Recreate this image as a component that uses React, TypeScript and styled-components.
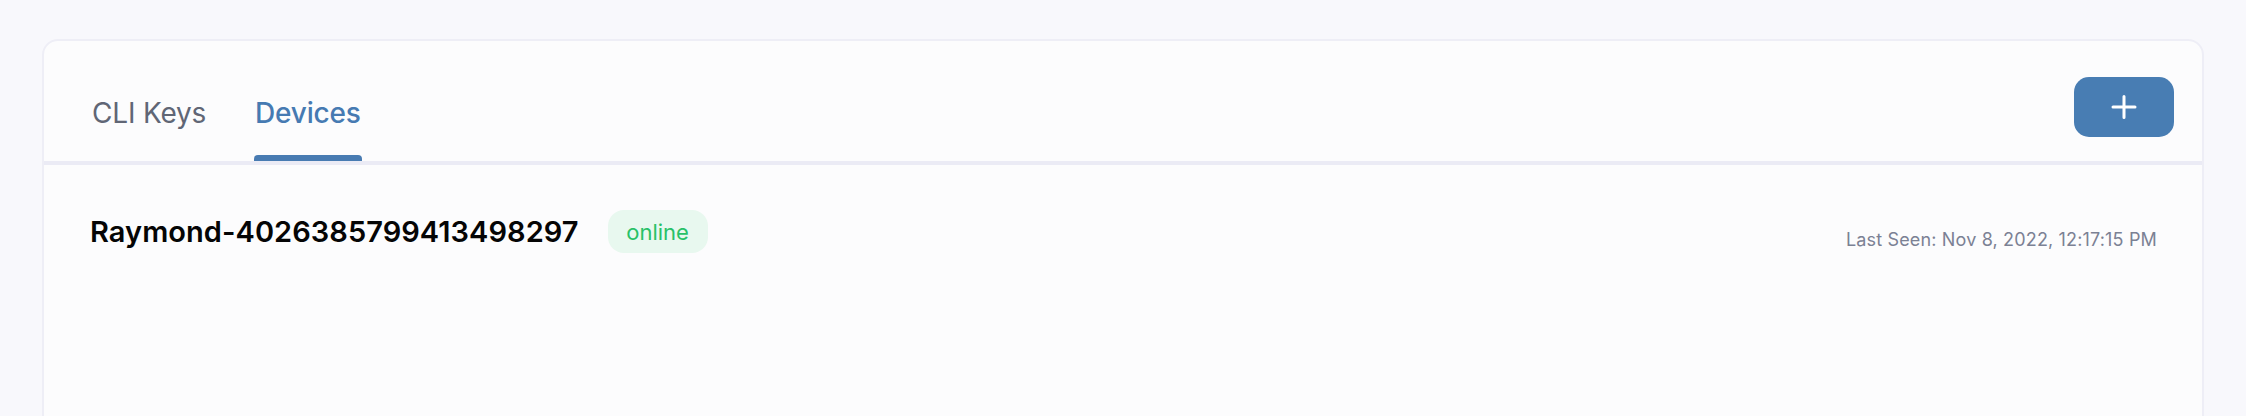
import React from "react";
import styled, { createGlobalStyle } from "styled-components";

const GlobalStyle = createGlobalStyle`
  html, body {
    margin: 0;
    padding: 0;
    background: #f8f8fc;
    font-family: Inter, "Noto Sans", sans-serif;
  }
  * { box-sizing: border-box; }
`;

const Page = styled.div`
  padding: 39px 42px 0 42px;
  height: 416px;
  overflow: hidden;
`;

const Card = styled.section`
  background: #fcfcfd;
  border: 2px solid #eeeef6;
  border-radius: 16px;
  min-height: 520px;
`;

const Header = styled.header`
  display: flex;
  justify-content: space-between;
  align-items: flex-start;
  height: 124px;
  padding: 36px 28px 0 48px;
  border-bottom: 4px solid #ebebf5;
`;

const TabList = styled.nav`
  display: flex;
  gap: 49px;
  align-self: flex-end;
`;

const Tab = styled.button<{ $active?: boolean }>`
  position: relative;
  background: none;
  border: none;
  padding: 0 0 28px 0;
  margin: 0;
  font-family: Inter, "Noto Sans", sans-serif;
  font-size: 28px;
  line-height: 40px;
  font-weight: ${(p) => (p.$active ? 500 : 400)};
  color: ${(p) => (p.$active ? "#467ab2" : "#606675")};
  letter-spacing: -0.2px;
  cursor: pointer;

  &::after {
    content: "";
    display: ${(p) => (p.$active ? "block" : "none")};
    position: absolute;
    left: -1px;
    right: -1px;
    bottom: 0;
    height: 6px;
    background: #487bb2;
    border-radius: 4px 4px 0 0;
  }
`;

const AddButton = styled.button`
  width: 100px;
  height: 60px;
  border: none;
  border-radius: 15px;
  background: #487db3;
  display: flex;
  align-items: center;
  justify-content: center;
  cursor: pointer;
`;

const DeviceRow = styled.div`
  display: flex;
  align-items: center;
  padding: 45px 45px 0 46px;
`;

const DeviceName = styled.div`
  font-size: 29px;
  font-weight: 600;
  color: #050505;
  letter-spacing: 0.05px;
`;

const StatusBadge = styled.span`
  margin-left: 29px;
  width: 100px;
  height: 43px;
  border-radius: 16px;
  background: #e8f8ef;
  color: #28c168;
  font-size: 22px;
  display: inline-flex;
  align-items: center;
  justify-content: center;
`;

const LastSeen = styled.div`
  margin-left: auto;
  padding-top: 16px;
  font-size: 18px;
  letter-spacing: 0.16px;
  color: #7b8194;
`;

const PlusIcon = () => (
  <svg width="26" height="24" viewBox="0 0 26 24" fill="none">
    <path d="M13 1.5V22.5M2 12H24" stroke="#ffffff" strokeWidth="3" strokeLinecap="round" />
  </svg>
);

export default function App() {
  return (
    <>
      <GlobalStyle />
      <Page>
        <Card>
          <Header>
            <TabList>
              <Tab>CLI Keys</Tab>
              <Tab $active>Devices</Tab>
            </TabList>
            <AddButton aria-label="Add">
              <PlusIcon />
            </AddButton>
          </Header>
          <DeviceRow>
            <DeviceName>Raymond-4026385799413498297</DeviceName>
            <StatusBadge>online</StatusBadge>
            <LastSeen>Last Seen: Nov 8, 2022, 12:17:15 PM</LastSeen>
          </DeviceRow>
        </Card>
      </Page>
    </>
  );
}
